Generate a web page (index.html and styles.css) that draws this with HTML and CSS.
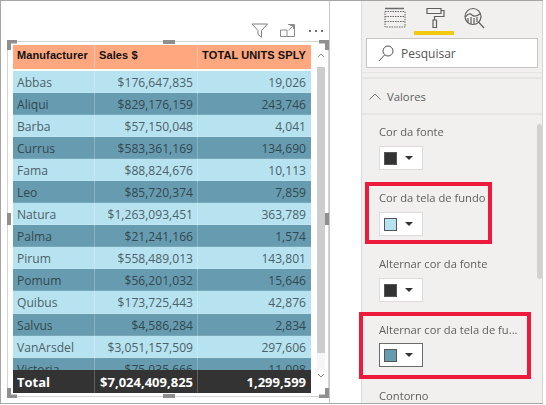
FILE: index.html
```html
<!DOCTYPE html>
<html lang="pt">
<head>
<meta charset="utf-8">
<title>Valores</title>
<link rel="stylesheet" href="styles.css">
</head>
<body>
<div class="frame">
  <main class="canvas">
    <div class="visual-tools">
      <svg class="ti" width="18" height="15" viewBox="0 0 18 15"><path d="M1 1h15.500L10.500 7.500V14.200L7 11.500V7.500Z" fill="none" stroke="#7f7f7f" stroke-width="1"/></svg>
      <svg class="ti" width="15" height="13" viewBox="0 0 15 13"><path d="M8 .5H14.500V12.500H.5V6M.5 6H7V12.500M8.500 6.500L13.500 1.500M10 1.500h3.500V5" fill="none" stroke="#8a8a8a"/></svg>
      <span class="dots"><i></i><i></i><i></i></span>
    </div>
    <section class="visual">
      <i class="h tl"></i><i class="h tc"></i><i class="h tr"></i><i class="h ml"></i><i class="h mr"></i><i class="h bl"></i><i class="h bc"></i><i class="h br"></i>
      <div class="table-wrap">
        <div class="table">
          <div class="row head"><div class="c">Manufacturer</div><div class="c">Sales $</div><div class="c num">TOTAL UNITS SPLY</div></div>
          <div class="body">
            <div class="row a"><div class="c">Abbas</div><div class="c num">$176,647,835</div><div class="c num">19,026</div></div>
            <div class="row b"><div class="c">Aliqui</div><div class="c num">$829,176,159</div><div class="c num">243,746</div></div>
            <div class="row a"><div class="c">Barba</div><div class="c num">$57,150,048</div><div class="c num">4,041</div></div>
            <div class="row b"><div class="c">Currus</div><div class="c num">$583,361,169</div><div class="c num">134,690</div></div>
            <div class="row a"><div class="c">Fama</div><div class="c num">$88,824,676</div><div class="c num">10,113</div></div>
            <div class="row b"><div class="c">Leo</div><div class="c num">$85,720,374</div><div class="c num">7,859</div></div>
            <div class="row a"><div class="c">Natura</div><div class="c num">$1,263,093,451</div><div class="c num">363,789</div></div>
            <div class="row b"><div class="c">Palma</div><div class="c num">$21,241,166</div><div class="c num">1,574</div></div>
            <div class="row a"><div class="c">Pirum</div><div class="c num">$558,489,013</div><div class="c num">143,801</div></div>
            <div class="row b"><div class="c">Pomum</div><div class="c num">$56,201,032</div><div class="c num">15,646</div></div>
            <div class="row a"><div class="c">Quibus</div><div class="c num">$173,725,443</div><div class="c num">42,876</div></div>
            <div class="row b"><div class="c">Salvus</div><div class="c num">$4,586,284</div><div class="c num">2,834</div></div>
            <div class="row a"><div class="c">VanArsdel</div><div class="c num">$3,051,157,509</div><div class="c num">297,606</div></div>
            <div class="row b"><div class="c">Victoria</div><div class="c num">$75,035,666</div><div class="c num">11,098</div></div>
          </div>
          <div class="row total"><div class="c">Total</div><div class="c num">$7,024,409,825</div><div class="c num">1,299,599</div></div>
        </div>
        <div class="scroll">
          <svg width="8" height="5" viewBox="0 0 8 5"><path d="M1 4L4 1L7 4" fill="none" stroke="#8c8c8c"/></svg>
          <div class="track"><div class="thumb"></div></div>
          <svg width="8" height="5" viewBox="0 0 8 5"><path d="M1 1L4 4L7 1" fill="none" stroke="#8c8c8c"/></svg>
        </div>
      </div>
    </section>
  </main>
  <div class="gap"></div>
  <aside class="pane">
    <div class="tabs">
      <svg width="22" height="21" viewBox="0 0 22 21"><path d="M1 1.500H20" stroke="#6b6b6b" stroke-width="1.500"/><path d="M1 4.500H21V20H1ZM1 9.500H21M1 14.500H21" fill="none" stroke="#666" stroke-dasharray="1.500 1"/></svg>
      <div class="tab-active"><svg width="20" height="21" viewBox="0 0 20 21"><path d="M2 1.500H16V6.500H2Z M16 3.500H19V9.500H9.500V13" fill="none" stroke="#5f5f5f" stroke-width="1.200"/><path d="M8 13H11.500V20.500H8Z" fill="none" stroke="#5f5f5f" stroke-width="1.200"/></svg></div>
      <svg class="analytics" width="21" height="23" viewBox="0 0 21 23"><circle cx="9" cy="9.500" r="8" fill="none" stroke="#5f5f5f" stroke-width="1.200"/><path d="M1.500 10Q5 5 8 8T16.500 6.500M14.500 15L20 21M4 11V16M7 10V17M10 11V17M13 10V15" fill="none" stroke="#5f5f5f" stroke-width="1.200"/></svg>
    </div>
    <div class="search">
      <svg width="16" height="17" viewBox="0 0 16 17"><circle cx="10" cy="6" r="5" fill="none" stroke="#555"/><path d="M6.500 10L1 16" stroke="#555"/></svg>
      <span>Pesquisar</span>
    </div>
    <div class="rule"></div>
    <div class="section-head">
      <svg width="12" height="7" viewBox="0 0 12 7"><path d="M.5 6.500L6 1L11.500 6.500" fill="none" stroke="#777"/></svg>
      <span>Valores</span>
    </div>
    <div class="props">
      <div class="prop first">
        <div class="label">Cor da fonte</div>
        <div class="picker"><i class="sw dark"></i><i class="caret"></i></div>
      </div>
      <div class="prop marked">
        <div class="label">Cor da tela de fundo</div>
        <div class="picker"><i class="sw light"></i><i class="caret"></i></div>
      </div>
      <div class="prop third">
        <div class="label">Alternar cor da fonte</div>
        <div class="picker"><i class="sw dark"></i><i class="caret"></i></div>
      </div>
      <div class="prop marked wide">
        <div class="label">Alternar cor da tela de fu...</div>
        <div class="picker focus"><i class="sw teal"></i><i class="caret"></i></div>
      </div>
      <div class="label last">Contorno</div>
      <div class="pane-thumb"></div>
    </div>
  </aside>
</div>
</body>
</html>
```
FILE: styles.css
```css
* { box-sizing: border-box; }
html, body { margin: 0; height: 100%; background: #fff; overflow: hidden; }
body { font-family: "Open Sans", sans-serif; color: #605e5c; }
.frame { width: 543px; height: 404px; display: flex; border: solid #a6a6a6; border-width: 1px 0 1px 1px; overflow: hidden; filter: blur(.3px); }
.canvas { width: 329px; flex: none; border-right: 1px solid #c8c8c8; padding: 19px 0 0 6px; display: flex; flex-direction: column; }
.gap { width: 31px; flex: none; }
.visual-tools { height: 21px; display: flex; align-items: center; justify-content: flex-end; gap: 11px; padding-right: 6px; }
.dots { display: flex; gap: 4px; margin-left: 3px; }
.dots i { width: 2px; height: 2px; background: #707070; }
.visual { position: relative; width: 322px; height: 356px; border: 1px solid #d4d4d4; padding: 3px 0 0 5px; }
.h { position: absolute; background: #8f8f8f; }
.tl, .tr, .bl, .br { width: 10px; height: 10px; }
.tl { left: -1px; top: -2px; clip-path: polygon(0 0,100% 0,100% 35%,40% 35%,40% 100%,0 100%); }
.tr { right: -1px; top: -2px; clip-path: polygon(0 0,100% 0,100% 100%,60% 100%,60% 35%,0 35%); }
.bl { left: -1px; bottom: -2px; clip-path: polygon(0 0,40% 0,40% 65%,100% 65%,100% 100%,0 100%); }
.br { right: -1px; bottom: -2px; clip-path: polygon(60% 0,100% 0,100% 100%,0 100%,0 65%,60% 65%); }
.tc, .bc { width: 12px; height: 4px; left: 155px; }
.tc { top: -2px; }
.bc { bottom: -2px; }
.ml, .mr { width: 4px; height: 12px; top: 171px; }
.ml { left: -1px; }
.mr { right: -1px; }
.table-wrap { display: flex; gap: 6px; }
.table { width: 298px; display: flex; flex-direction: column; flex: none; }
.row { display: grid; grid-template-columns: 81px 103px 114px; flex: none; }
.c { padding: 0 4px 0 4px; white-space: nowrap; border-left: 1px solid rgba(255,255,255,.22); }
.c:first-child { border-left: 0; }
.c:last-child { padding-right: 5px; }
.num { text-align: right; }
.head { height: 24px; background: #ffa77f; color: #111; font: bold 11px/20px "Liberation Sans", sans-serif; letter-spacing: .1px; }
.head .c { border-left-color: rgba(255,255,255,.35); }
.body { height: 299.500px; margin-top: 1.500px; overflow: hidden; }
.body .row { height: 22.100px; font-size: 12.100px; line-height: 23px; border-bottom: 1px solid rgba(255,255,255,.12); }
.a { background: #b7e3f0; color: #4b6068; }
.b { background: #679cb0; color: #33474f; }
.total { height: 23px; background: #333; color: #fff; font-weight: 700; font-size: 13px; line-height: 24px; }
.scroll { width: 8px; display: flex; flex-direction: column; align-items: center; padding-top: 8px; }
.track { width: 8px; height: 303px; margin-top: 9px; background: #f6f6f6; }
.thumb { width: 8px; height: 286px; background: #cdcdcd; }
.scroll svg:last-child { margin-top: 3px; }
.pane { width: 182px; flex: none; background: #f1f0ef; border-left: 1px solid #dcdcdc; border-right: 1px solid #d5d5d5; display: flex; flex-direction: column; }
.tabs { height: 35px; flex: none; display: flex; align-items: flex-start; padding: 6px 0 0 22px; gap: 8px; }
.tab-active { width: 40px; height: 28px; padding-left: 11px; border-bottom: 4px solid #f2c811; }
.analytics { margin-left: 2px; }
.search { height: 30px; width: 172px; margin: 2px 0 0 4px; background: #fff; border: 1px solid #c8c6c4; display: flex; align-items: center; gap: 7px; padding-left: 11px; font-size: 12px; color: #555; flex: none; }
.rule { height: 7px; margin-top: 4px; border-bottom: 2px solid #e6e5e4; border-top: 1px solid #e6e5e4; flex: none; }
.section-head { height: 36px; flex: none; display: flex; align-items: center; gap: 6px; padding-left: 7px; font-size: 11.300px; color: #605e5c; border-bottom: 2px solid #e6e5e4; }
.props { position: relative; flex: 1; min-height: 0; padding-left: 17px; font-size: 11.200px; }
.prop { display: flex; flex-direction: column; align-items: flex-start; }
.first { padding-top: 9px; }
.label { line-height: 16px; white-space: nowrap; }
.picker { margin-top: 6px; width: 44px; height: 24px; background: #fff; border: 1px solid #dcdbda; display: flex; align-items: center; gap: 8px; padding-left: 4px; }
.sw { width: 13px; height: 13px; border: 1px solid #555; }
.dark { background: #333; }
.light { background: #b7e3f0; }
.teal { background: #679cb0; }
.caret { border: solid transparent; border-width: 4px 4px 0; border-top-color: #333; }
.focus { border-color: #6b6b6b; }
.marked { border: 4px solid #ee1a3c; margin-left: -14px; padding: 4px 0 4px 10px; width: 127px; margin-top: 12px; }
.third { margin-top: 12px; }
.wide { width: 172px; margin-left: -20px; padding: 6px 0 8px 16px; margin-top: 10px; }
.wide .picker { margin-top: 5px; }
.last { margin-top: 9px; }
.pane-thumb { position: absolute; right: 0; top: 9px; width: 5px; height: 155px; border-radius: 3px; background: #d2d1d0; }
```
